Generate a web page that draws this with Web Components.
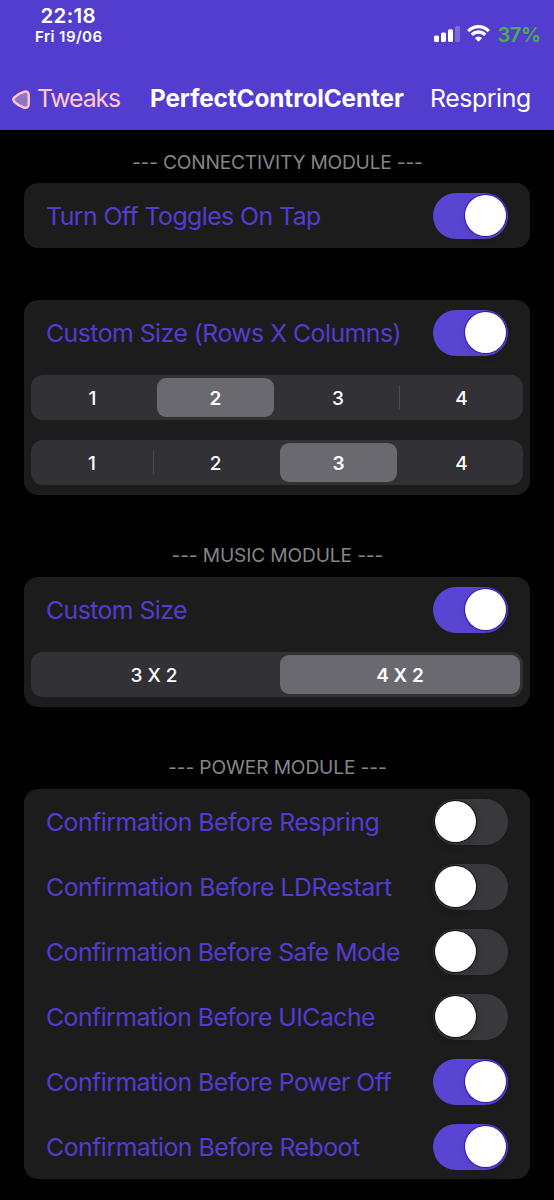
<!DOCTYPE html>
<html lang="en">
<head>
<meta charset="utf-8">
<title>PerfectControlCenter</title>
<style>
html,body{margin:0;background:#000}
body{font-family:Inter,"Liberation Sans",sans-serif;width:554px;height:1200px;overflow:hidden}
</style>
</head>
<body>
<settings-page></settings-page>
<script>
const define = (name, html, setup) => {
  const template = document.createElement('template');
  template.innerHTML = html;
  customElements.define(name, class extends HTMLElement {
    connectedCallback() {
      if (this.shadowRoot) return;
      this.attachShadow({mode: 'open'}).append(template.content.cloneNode(true));
      if (setup) setup(this, this.shadowRoot);
    }
  });
};

/* A single line of text tracked so that its glyphs span exactly w pixels. */
define('tracked-text', `<style>:host{display:block;white-space:pre;line-height:1}span{display:inline-block}</style><span></span>`, (el, root) => {
  const span = root.querySelector('span');
  const text = el.getAttribute('text');
  const w = parseFloat(el.getAttribute('w'));
  span.textContent = text;
  const cs = getComputedStyle(el);
  const ctx = document.createElement('canvas').getContext('2d');
  ctx.font = `${cs.fontWeight} ${cs.fontSize} ${cs.fontFamily}`;
  const m = ctx.measureText(text);
  const gap = (w - m.actualBoundingBoxLeft - m.actualBoundingBoxRight) / (text.length - 1);
  span.style.letterSpacing = gap.toFixed(3) + 'px';
  span.style.marginLeft = m.actualBoundingBoxLeft.toFixed(2) + 'px';
  el.style.width = w + 'px';
});

define('toggle-switch', `<style>
:host{display:flex;box-sizing:border-box;width:75.5px;height:46px;border-radius:23px;padding:2.5px;background:#39393d;flex:none}
:host([on]){background:#5a45d2;justify-content:flex-end}
i{width:41px;height:41px;border-radius:50%;background:#fff;box-shadow:0 0 0 1px #111,0 3px 8px #0003}
:host([on]) i{box-shadow:0 0 0 1px #3518b4,0 3px 8px #0002}
</style><i></i>`);

define('toggle-row', `<style>
:host{display:flex;height:65px;box-sizing:border-box;align-items:center;justify-content:space-between;padding:0 22px 0 23px}
tracked-text{font-size:24.8px;color:#533cd0;padding-top:1px}
toggle-switch{margin-top:.2px}
</style><slot></slot><toggle-switch></toggle-switch>`, (el, root) => {
  const label = document.createElement('tracked-text');
  label.setAttribute('text', el.getAttribute('label'));
  label.setAttribute('w', el.getAttribute('w'));
  root.querySelector('slot').replaceWith(label);
  root.querySelector('toggle-switch').toggleAttribute('on', el.hasAttribute('on'));
});

define('segment-row', `<style>
:host{display:block;height:65px;box-sizing:border-box;padding:10px 7px 10.5px}
div{display:grid;grid-auto-flow:column;grid-auto-columns:1fr;height:44.5px;border-radius:12px;background:#313136}
span{display:flex;align-items:center;justify-content:center;box-sizing:border-box;font-size:19px;font-weight:500;color:#fff;margin:3px;padding:2.5px 0 0 0;border-radius:9px}
span.sel{background:#6a696f;font-weight:600}
span.rule{background:linear-gradient(#4a4a4f,#4a4a4f) 100% 50%/1.5px 24px no-repeat;margin-right:0;padding-right:4px;border-radius:0}
</style><div></div>`, (el, root) => {
  const sel = +el.getAttribute('selected');
  const items = el.getAttribute('items').split(',');
  items.forEach((t, i) => {
    const s = document.createElement('span');
    s.textContent = t;
    if (i === sel) s.className = 'sel';
    else if (i + 1 !== sel && i < items.length - 1) s.className = 'rule';
    root.querySelector('div').append(s);
  });
});

define('settings-card', `<style>
:host{display:block;margin:0 24px;background:#1c1c1d;border-radius:14px;overflow:hidden}
</style><slot></slot>`);

define('section-title', `<style>
:host{display:flex;justify-content:center;align-items:flex-end;box-sizing:border-box;font-size:19.2px;color:#85858a;padding:0 0 11px 1px}
</style><slot></slot>`);

define('cell-signal', `<style>:host{display:block;width:26px;height:16px}svg{display:block}</style>
<svg width="26" height="16" viewBox="0 0 26 16"><g fill="#fff"><rect y="9.5" width="5" height="6.5" rx="1.5"/><rect x="7" y="6.5" width="5" height="9.5" rx="1.5"/><rect x="14" y="3.2" width="5" height="12.8" rx="1.5"/><rect x="21" width="5" height="16" rx="1.5" opacity=".24"/></g></svg>`);

define('wifi-signal', `<style>:host{display:block;width:23px;height:17px}svg{display:block}</style>
<svg width="23" height="17" viewBox="0 0 23 17"><g fill="none" stroke="#fff" stroke-width="3.3"><path d="M1.2 6.1Q5.6 1.7 11.5 1.7T21.8 6.1"/><path d="M4.7 9.8Q7.7 7 11.5 7T18.3 9.8"/></g><path fill="#fff" d="M7.8 13.1Q11.5 10.1 15.2 13.1L12 16.3Q11.5 16.8 11 16.3Z"/></svg>`);

define('back-icon', `<style>:host{display:block;width:18px;height:19px}svg{display:block}</style>
<svg width="18" height="19" viewBox="0 0 18 19"><path d="M2.4 7.4Q.3 9.6 2.4 11.8Q6.5 15.8 11.8 17.5Q16.2 18.6 16.6 14.9Q17 9.5 16.6 4.3Q16.2.7 11.8 1.8Q6.5 3.4 2.4 7.4Z" fill="#9174c5" stroke="#ffc9cf" stroke-width="2.4" stroke-linejoin="round"/></svg>`);

define('top-bar', `<style>
:host{display:block;height:130px;background:#523dcf;color:#fff;box-sizing:border-box}
.status{display:flex;justify-content:space-between;height:78px;padding:0 14px 0 36px;box-sizing:border-box}
.clock{display:flex;flex-direction:column;padding-top:6px}
.time{font-size:20.5px;font-weight:600;margin-left:5.5px}
.date{font-size:15.1px;font-weight:600;margin-top:2px}
.right{display:flex;align-items:center;height:24px;padding-top:22px}
cell-signal{margin:0 7px 0 0}wifi-signal{margin:0 9px 1px 0}
.battery{font-size:20px;font-weight:600;color:#4eae51;padding-top:1px}
.nav{display:flex;align-items:center;height:40px;padding-left:12px;font-size:24.8px}
back-icon{margin:2px 8px 0 0}
.back{color:#ffc9cf;margin-right:31px}
.title{font-weight:700;font-size:24.3px;margin-right:28px}
</style>
<div class="status"><div class="clock"><tracked-text class="time" text="22:18" w="54"></tracked-text><tracked-text class="date" text="Fri 19/06" w="65.5"></tracked-text></div>
<div class="right"><cell-signal></cell-signal><wifi-signal></wifi-signal><tracked-text class="battery" text="37%" w="41.5"></tracked-text></div></div>
<div class="nav"><back-icon></back-icon><tracked-text class="back" text="Tweaks" w="82"></tracked-text><tracked-text class="title" text="PerfectControlCenter" w="253"></tracked-text><tracked-text text="Respring" w="98"></tracked-text></div>`);

define('settings-page', `<style>
:host{display:block;width:554px;height:1200px;background:#000}
.t1{height:53px}.t2{height:82px;padding-bottom:12px}.gap{height:52px}
</style>
<top-bar></top-bar>
<section-title class="t1"><tracked-text text="--- CONNECTIVITY MODULE ---" w="289"></tracked-text></section-title>
<settings-card><toggle-row label="Turn Off Toggles On Tap" w="273" on></toggle-row></settings-card>
<div class="gap"></div>
<settings-card><toggle-row label="Custom Size (Rows X Columns)" w="352.5" on></toggle-row><segment-row items="1,2,3,4" selected="1"></segment-row><segment-row items="1,2,3,4" selected="2"></segment-row></settings-card>
<section-title class="t2"><tracked-text text="--- MUSIC MODULE ---" w="210"></tracked-text></section-title>
<settings-card><toggle-row label="Custom Size" w="140" on></toggle-row><segment-row items="3 X 2,4 X 2" selected="1"></segment-row></settings-card>
<section-title class="t2"><tracked-text text="--- POWER MODULE ---" w="217"></tracked-text></section-title>
<settings-card>
<toggle-row label="Confirmation Before Respring" w="331.5"></toggle-row>
<toggle-row label="Confirmation Before LDRestart" w="345"></toggle-row>
<toggle-row label="Confirmation Before Safe Mode" w="353"></toggle-row>
<toggle-row label="Confirmation Before UICache" w="328"></toggle-row>
<toggle-row label="Confirmation Before Power Off" w="344.5" on></toggle-row>
<toggle-row label="Confirmation Before Reboot" w="313" on></toggle-row>
</settings-card>`);
</script>
</body>
</html>
